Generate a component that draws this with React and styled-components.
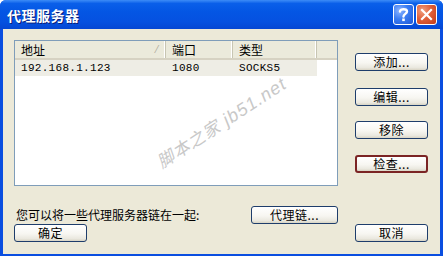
import React from "react";
import styled, { createGlobalStyle } from "styled-components";

const Global = createGlobalStyle`
  html, body { margin: 0; padding: 0; background: #ffffff; }
  body { font-family: "Noto Sans CJK SC", "Liberation Sans", sans-serif; }
`;

const Window = styled.div`
  width: 443px;
  height: 256px;
  box-sizing: border-box;
  display: flex;
  flex-direction: column;
  background: #0a4ee0;
  border-radius: 6px 6px 0 0;
  overflow: hidden;
  position: relative;
`;

const TitleBar = styled.div`
  height: 29px;
  flex: none;
  display: flex;
  align-items: center;
  padding: 0 6px 0 7px;
  background: linear-gradient(to bottom, #3d8cf7 0%, #0a5fe9 12%, #0456e4 40%, #0551e0 75%, #0547d3 100%);
`;

const Title = styled.div`
  flex: 1;
  color: #ffffff;
  font-size: 14px;
  font-weight: 700;
  letter-spacing: 0.5px;
  text-shadow: 1px 1px 0 #0a1f7a;
  line-height: 1;
`;

const CapButton = styled.div`
  width: 21px;
  height: 21px;
  box-sizing: border-box;
  border: 1px solid #ffffff;
  border-radius: 3px;
  margin-left: 2px;
  display: flex;
  align-items: center;
  justify-content: center;
  background: ${(p) =>
    p.$close
      ? "radial-gradient(circle at 30% 30%, #f0a080 0%, #e0603a 45%, #c23a17 100%)"
      : "radial-gradient(circle at 30% 30%, #8fb6ff 0%, #3a7cf2 45%, #1f58d6 100%)"};
`;

const Body = styled.div`
  flex: 1;
  margin: 0 3px 3px 3px;
  background: #ece9d8;
  display: grid;
  grid-template-columns: 1fr 73px;
  column-gap: 17px;
  padding: 11px 12px 12px 11px;
  box-sizing: border-box;
`;

const LeftCol = styled.div`
  display: flex;
  flex-direction: column;
  min-width: 0;
`;

const ListBox = styled.div`
  height: 146px;
  box-sizing: border-box;
  border: 1px solid #7f9db9;
  background: #ffffff;
  display: flex;
  flex-direction: column;
`;

const HeaderRow = styled.div`
  display: grid;
  grid-template-columns: 151px 67px 84px 1fr;
  height: 19px;
  background: #ebeadb;
  border-bottom: 2px solid #d6d2c2;
  box-sizing: border-box;
`;

const HeaderCell = styled.div`
  position: relative;
  font-size: 12px;
  color: #000;
  display: flex;
  align-items: center;
  padding-left: 6px;
  border-right: ${(p) => (p.$last ? "none" : "1px solid #c7c5b2")};
  box-shadow: ${(p) => (p.$last ? "none" : "inset -1px 0 0 #ffffff")};
  line-height: 1;
`;

const SortMark = styled.span`
  position: absolute;
  right: 7px;
  top: 4px;
  font-size: 10px;
  color: #aca899;
  font-family: "Liberation Sans", sans-serif;
`;

const DataRow = styled.div`
  display: grid;
  grid-template-columns: 151px 67px 84px;
  height: 16px;
  width: 302px;
  background: #eeede5;
`;

const DataCell = styled.div`
  font-family: "Liberation Mono", "DejaVu Sans Mono", monospace;
  font-size: 11px;
  color: #000;
  display: flex;
  align-items: center;
  padding-left: 6px;
  letter-spacing: 0.3px;
`;

const BottomArea = styled.div`
  display: grid;
  grid-template-columns: 1fr 87px;
  grid-template-rows: 18px 18px;
  row-gap: 0;
  margin-top: 20px;
`;

const Label = styled.div`
  font-size: 12px;
  color: #000;
  display: flex;
  align-items: center;
  padding-left: 2px;
  line-height: 1;
`;

const Btn = styled.button`
  width: ${(p) => p.$w || 73}px;
  height: 18px;
  box-sizing: border-box;
  padding: 0;
  margin: 0;
  border: ${(p) => (p.$focus ? "2px solid #7b2424" : "1px solid #1e3d6b")};
  border-radius: 3px;
  background: linear-gradient(to bottom, #ffffff 0%, #f7f6f1 55%, #eae8df 85%, #d8d4c4 100%);
  font-family: "Noto Sans CJK SC", "Liberation Sans", sans-serif;
  font-size: 12px;
  line-height: 1;
  color: #000;
  display: flex;
  align-items: center;
  justify-content: center;
  letter-spacing: 0.5px;
`;

const RightCol = styled.div`
  display: flex;
  flex-direction: column;
  padding-top: 13px;
`;

const Gap = styled.div`
  height: ${(p) => p.$h}px;
  flex: ${(p) => (p.$grow ? 1 : "none")};
`;

const Watermark = styled.div`
  position: absolute;
  left: 158px;
  top: 150px;
  transform: rotate(-33deg);
  transform-origin: left center;
  color: #c8c8c8;
  font-size: 17px;
  font-style: italic;
  font-family: "Noto Sans CJK SC", sans-serif;
  white-space: nowrap;
  letter-spacing: 1px;
  pointer-events: none;
`;

const WmLatin = styled.span`
  font-family: "Liberation Sans", sans-serif;
  font-size: 18px;
  margin-left: 6px;
`;

export default function App() {
  return (
    <>
      <Global />
      <Window>
        <TitleBar>
          <Title>代理服务器</Title>
          <CapButton>
            <svg width="13" height="15" viewBox="0 0 13 15">
              <path d="M3 4.5 C3 1.5 10 1.5 10 4.5 C10 6.8 6.5 7 6.5 9.5" fill="none" stroke="#fff" strokeWidth="2.4" strokeLinecap="round" />
              <rect x="5.2" y="11.5" width="2.6" height="2.6" fill="#fff" />
            </svg>
          </CapButton>
          <CapButton $close>
            <svg width="13" height="13" viewBox="0 0 13 13">
              <path d="M2 2 L11 11 M11 2 L2 11" stroke="#fff" strokeWidth="2.2" strokeLinecap="square" />
            </svg>
          </CapButton>
        </TitleBar>
        <Body>
          <LeftCol>
            <ListBox>
              <HeaderRow>
                <HeaderCell>
                  地址<SortMark>⁄</SortMark>
                </HeaderCell>
                <HeaderCell>端口</HeaderCell>
                <HeaderCell>类型</HeaderCell>
                <HeaderCell $last />
              </HeaderRow>
              <DataRow>
                <DataCell>192.168.1.123</DataCell>
                <DataCell>1080</DataCell>
                <DataCell>SOCKS5</DataCell>
              </DataRow>
            </ListBox>
            <BottomArea>
              <Label>您可以将一些代理服务器链在一起:</Label>
              <Btn $w={87}>代理链...</Btn>
              <Btn $w={73}>确定</Btn>
            </BottomArea>
          </LeftCol>
          <RightCol>
            <Btn>添加...</Btn>
            <Gap $h={17} />
            <Btn>编辑...</Btn>
            <Gap $h={15} />
            <Btn>移除</Btn>
            <Gap $h={16} />
            <Btn $focus>检查...</Btn>
            <Gap $grow />
            <Btn>取消</Btn>
          </RightCol>
        </Body>
        <Watermark>
          脚本之家<WmLatin>jb51.net</WmLatin>
        </Watermark>
      </Window>
    </>
  );
}
